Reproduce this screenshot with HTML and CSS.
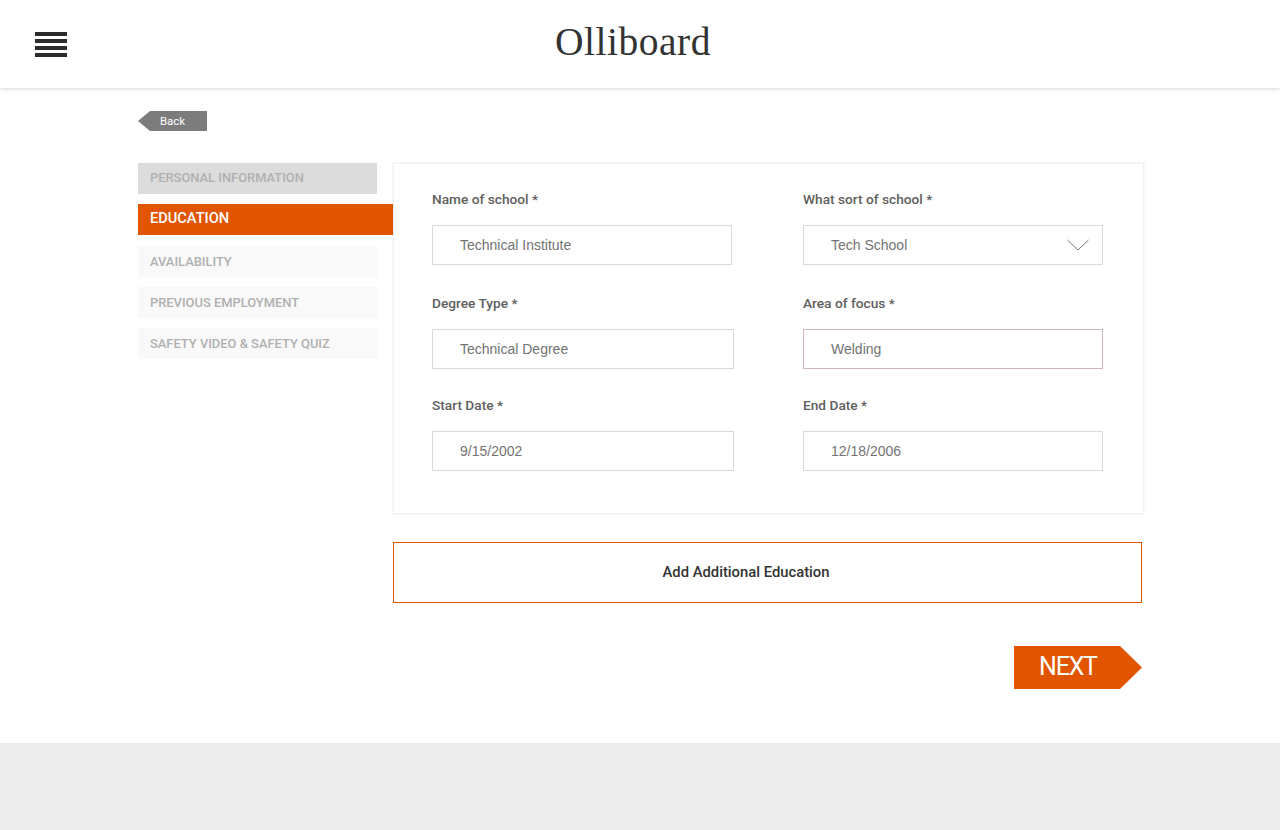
FILE: index.html
```html
<!DOCTYPE html>
<html lang="en">
<head>
<meta charset="utf-8">
<title>Olliboard</title>
<link rel="stylesheet" href="styles.css">
</head>
<body>
<header class="topbar">
  <div class="burger" aria-label="Menu"><span></span><span></span><span></span><span></span></div>
  <div class="logo">Olliboard</div>
</header>
<main class="page">
  <a class="back"><span>Back</span></a>
  <div class="columns">
    <nav class="steps">
      <div class="step done">PERSONAL INFORMATION</div>
      <div class="step active">EDUCATION</div>
      <div class="step">AVAILABILITY</div>
      <div class="step">PREVIOUS EMPLOYMENT</div>
      <div class="step">SAFETY VIDEO &amp; SAFETY QUIZ</div>
    </nav>
    <div class="content">
      <section class="card">
        <div class="row">
          <div class="field"><label>Name of school *</label><div class="input">Technical Institute</div></div>
          <div class="field"><label>What sort of school *</label><div class="input select">Tech School
            <svg class="chev" width="22" height="12" viewBox="0 0 22 12"><path d="M0.5 1 L11 11 L21.5 1" fill="none" stroke="#777" stroke-width="1"/></svg></div></div>
        </div>
        <div class="row">
          <div class="field"><label>Degree Type *</label><div class="input wide">Technical Degree</div></div>
          <div class="field"><label>Area of focus *</label><div class="input focus">Welding</div></div>
        </div>
        <div class="row">
          <div class="field"><label>Start Date *</label><div class="input wide">9/15/2002</div></div>
          <div class="field"><label>End Date *</label><div class="input">12/18/2006</div></div>
        </div>
      </section>
      <button class="add">Add Additional Education</button>
      <div class="actions"><a class="next">NEXT</a></div>
    </div>
  </div>
</main>
<footer class="footer"></footer>
</body>
</html>
```

FILE: styles.css
```css
* { box-sizing: border-box; }
html, body { margin: 0; padding: 0; }
body {
  width: 1280px;
  height: 830px;
  overflow: hidden;
  background: #fff;
  font-family: Roboto, "Liberation Sans", sans-serif;
  display: flex;
  flex-direction: column;
}
.topbar {
  height: 88px;
  flex: none;
  display: flex;
  align-items: flex-start;
  background: #fff;
  box-shadow: 0 1px 4px rgba(0, 0, 0, 0.16);
  padding: 32px 0 0 35px;
}
.burger { width: 32px; display: flex; flex-direction: column; gap: 3.4px; }
.burger span { display: block; height: 3.6px; background: #2b2b2b; }
.logo {
  margin: -14px 0 0 488px;
  font-family: "Liberation Serif", serif;
  font-size: 39.5px;
  line-height: 48px;
  color: #333;
  letter-spacing: 0.5px;
}
.page { flex: 1; padding: 23px 136px 0 138px; }
.back {
  display: flex;
  align-items: center;
  width: 69px;
  height: 20px;
  padding: 0 0 1px 22px;
  background: #7c7c7c;
  clip-path: polygon(0 50%, 12px 0, 100% 0, 100% 100%, 12px 100%);
  color: #fff;
  font-size: 11.4px;
  font-weight: 400;
}
.columns { display: flex; margin-top: 32px; align-items: flex-start; }
.steps { width: 239px; flex: none; display: flex; flex-direction: column; }
.step {
  height: 31px;
  margin-bottom: 10px;
  padding-left: 12px;
  background: #f9f9f9;
  color: #b0b0b0;
  font-size: 12.9px;
  font-weight: 500;
  line-height: 32px;
}
.step.done { background: #dcdcdc; line-height: 30px; }
.step.active {
  width: 255px;
  margin-bottom: 11px;
  background: #e15500;
  color: #fff;
  font-size: 14.6px;
  line-height: 29px;
}
.content { margin-left: 16px; width: 751px; flex: none; }
.card {
  height: 351px;
  padding: 27px 0 0 38px;
  background: #fff;
  border: 1px solid #f1f1f1;
  box-shadow: 0 0 2px rgba(0, 0, 0, 0.08);
}
.row { display: flex; height: 102px; }
.row:first-child { height: 104px; }
.field { width: 371px; flex: none; }
.field label {
  display: block;
  height: 34px;
  color: #606060;
  font-size: 13.7px;
  font-weight: 500;
  line-height: 16px;
}
.input {
  position: relative;
  width: 300px;
  height: 40px;
  padding-left: 27px;
  border: 1px solid #d9d9d9;
  color: #737373;
  font-family: "Liberation Sans", sans-serif;
  font-size: 14px;
  line-height: 38px;
}
.input.wide { width: 302px; }
.input.focus { border-color: #cdb6bb; }
.chev { position: absolute; right: 13px; top: 13px; }
.add {
  display: block;
  width: 749px;
  height: 61px;
  margin-top: 28px;
  padding: 0 43px 1px 0;
  background: #fff;
  border: 1px solid #e15500;
  color: #333;
  font-family: Roboto, "Liberation Sans", sans-serif;
  font-size: 14.8px;
  font-weight: 500;
}
.actions { display: flex; justify-content: flex-end; width: 749px; margin-top: 43px; }
.next {
  width: 128px;
  height: 43px;
  padding-left: 25px;
  background: #e15500;
  clip-path: polygon(0 0, 106px 0, 100% 50%, 106px 100%, 0 100%);
  color: #fff;
  font-size: 25px;
  font-weight: 400;
  letter-spacing: -1.2px;
  line-height: 41px;
}
.footer { height: 87px; flex: none; background: #ececec; }
```
